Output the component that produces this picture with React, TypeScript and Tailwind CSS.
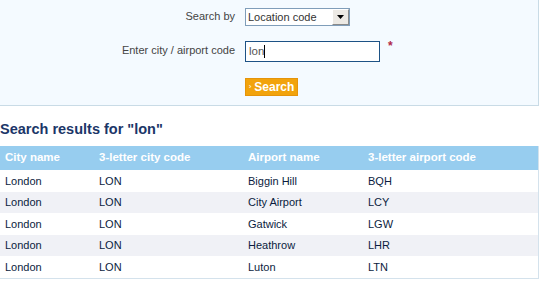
import React from "react"

const rows = [
  { city: "London", cityCode: "LON", airport: "Biggin Hill", code: "BQH", h: "h-[22px]" },
  { city: "London", cityCode: "LON", airport: "City Airport", code: "LCY", h: "h-[21px]" },
  { city: "London", cityCode: "LON", airport: "Gatwick", code: "LGW", h: "h-[22px]" },
  { city: "London", cityCode: "LON", airport: "Heathrow", code: "LHR", h: "h-[21px]" },
  { city: "London", cityCode: "LON", airport: "Luton", code: "LTN", h: "h-[22px]" },
]

const cols = "grid grid-cols-[94px_149px_120px_1fr] items-center"

export default function App() {
  return (
    <div className="w-[540px] h-[282px] overflow-hidden bg-white font-['Liberation_Sans',Arial,sans-serif]">
      {/* Search form */}
      <div className="w-[539px] h-[106px] bg-[#f4faff] border-r border-b border-[#c9dbe6] pt-[8px]">
        <div className="flex items-center h-[18px]">
          <div className="w-[235px] text-right text-[11px] text-[#444] -mt-[2px]">Search by</div>
          <div className="ml-[10px] w-[105px] h-[18px] border border-[#7f9db9] bg-white flex items-center">
            <span className="flex-1 pl-[2px] text-[11px] text-[#333] leading-none">Location code</span>
            <span className="w-[17px] h-[16px] bg-[#ece9e4] border-t border-l border-t-white border-l-white border-r border-b border-r-[#8a8a8a] border-b-[#8a8a8a] flex items-center justify-center">
              <svg width="7" height="4" viewBox="0 0 7 4">
                <path d="M0 0h7L3.5 4z" fill="#000" />
              </svg>
            </span>
          </div>
        </div>

        <div className="flex items-center h-[21px] mt-[15px]">
          <div className="w-[235px] text-right text-[11px] text-[#444] -mt-[2px]">Enter city / airport code</div>
          <div className="ml-[10px] w-[135px] h-[21px] border border-[#1d5285] bg-white flex items-center pl-[3px]">
            <span className="text-[11.5px] text-[#555] leading-none">lon</span>
            <span className="w-px h-[13px] bg-black" />
          </div>
          <span className="ml-[8px] self-start -mt-[1px] text-[12px] font-bold text-[#b0284a] leading-none">*</span>
        </div>

        <div className="mt-[16px] ml-[245px]">
          <button className="w-[53px] h-[18px] bg-[#f2a30c] border border-[#e5940a] text-white flex items-center justify-center gap-[3px]">
            <span className="text-[8px] leading-none">›</span>
            <span className="text-[12px] font-bold leading-none">Search</span>
          </button>
        </div>
      </div>

      {/* Results */}
      <div className="mt-[13px] h-[20px] text-[14.5px] font-bold text-[#1b3668] leading-[20px]">
        Search results for "lon"
      </div>

      <div className="mt-[7px] w-[539px] border-r border-b border-[#d4e2ec]">
        <div className={`${cols} h-[24px] bg-[#97cdef] text-white text-[11.5px] font-bold`}>
          <div className="pl-[5px]">City name</div>
          <div className="pl-[5px]">3-letter city code</div>
          <div className="pl-[5px]">Airport name</div>
          <div className="pl-[5px]">3-letter airport code</div>
        </div>
        {rows.map((r, i) => (
          <div
            key={r.code}
            className={`${cols} ${r.h} text-[11px] text-[#0b1c40] ${i % 2 === 1 ? "bg-[#f0f1f6]" : "bg-white"}`}
          >
            <div className="pl-[5px]">{r.city}</div>
            <div className="pl-[5px]">{r.cityCode}</div>
            <div className="pl-[5px]">{r.airport}</div>
            <div className="pl-[5px]">{r.code}</div>
          </div>
        ))}
      </div>
    </div>
  )
}
